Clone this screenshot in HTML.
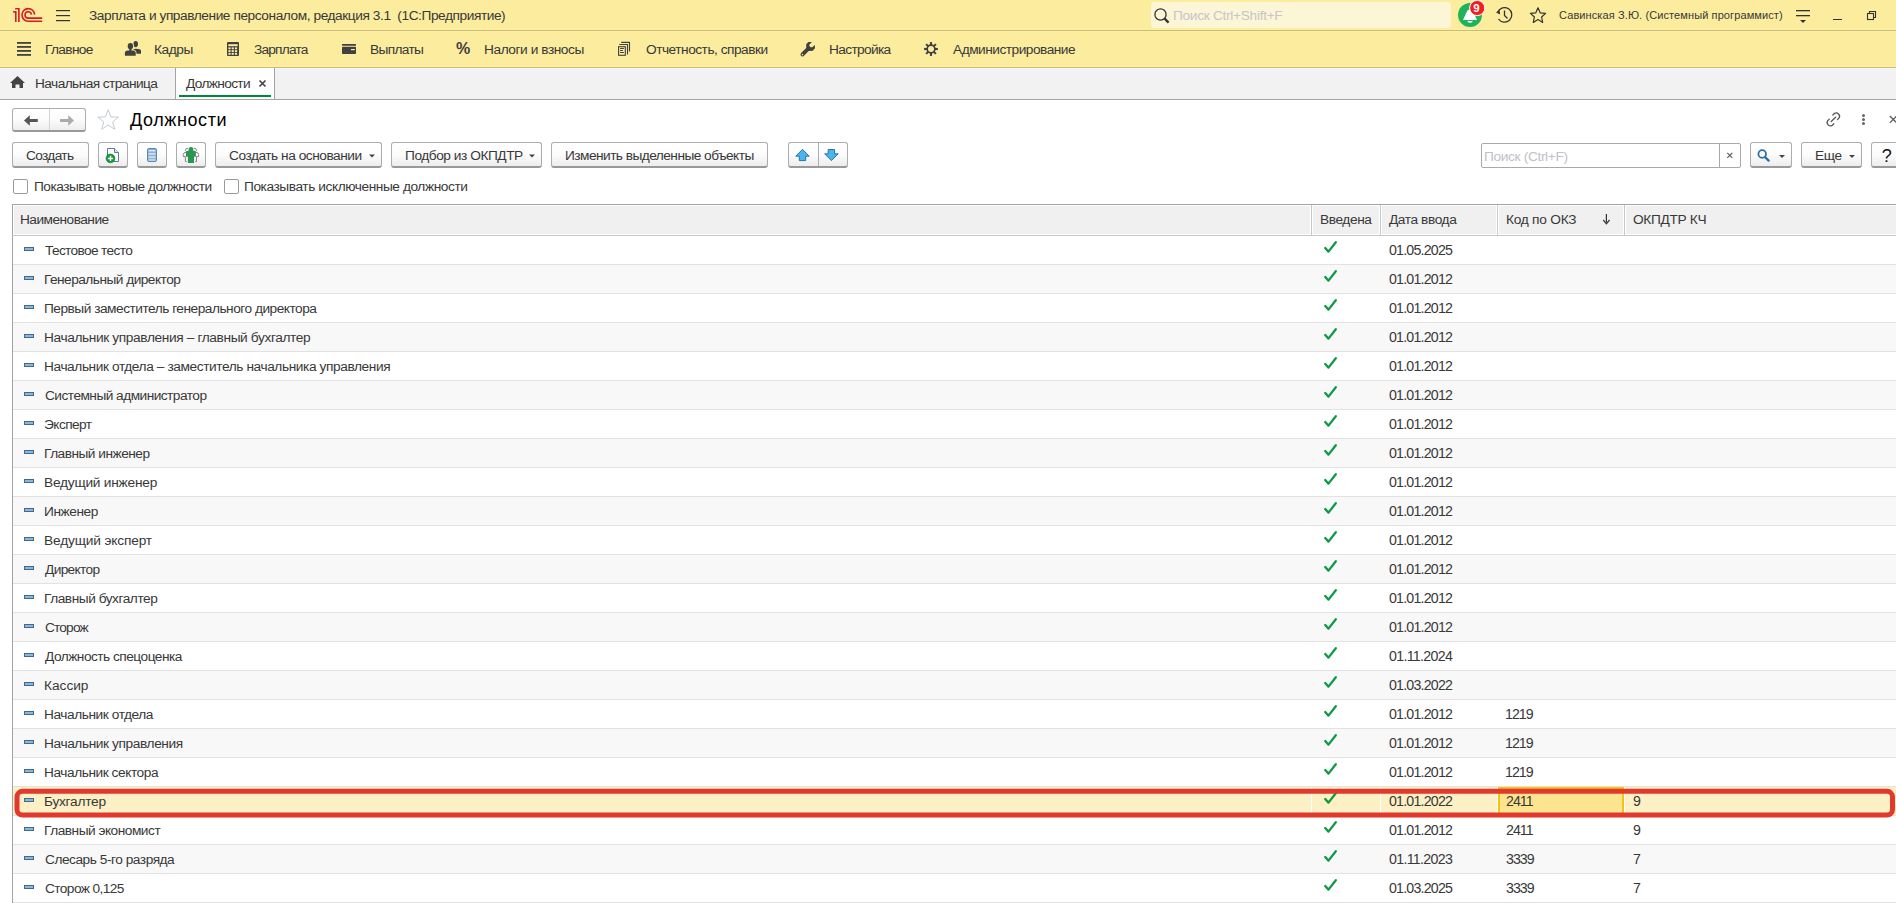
<!DOCTYPE html>
<html><head><meta charset="utf-8"><title>Должности</title>
<style>
html,body{margin:0;padding:0;width:1896px;height:903px;overflow:hidden;background:#fff;position:relative}
body{font-family:"Liberation Sans", sans-serif;color:#383838}
.r{position:absolute;display:block}
.t{position:absolute;white-space:pre}
</style></head><body>
<div class="r" style="left:0px;top:0px;width:1896px;height:30px;background:#fbec9e"></div>
<div class="r" style="left:0px;top:29px;width:1896px;height:1px;background:#fdf0a6"></div>
<div class="r" style="left:0px;top:30px;width:1896px;height:1px;background:#c9bd73"></div>
<div class="r" style="left:0px;top:31px;width:1896px;height:1px;background:#fdf0a6"></div>
<svg class="r" style="left:10px;top:5px;" width="36" height="20" viewBox="10 5 36 20"><g fill="none" stroke="#d81b22" stroke-width="1.6" stroke-linejoin="miter"><path d="M13.2,11.9 H15.8 V22"/><path d="M15.2,8.7 H18.9 V22"/><path d="M34.6,14.6 A6.3,6.3 0 1 0 28.2,21.2 H42.2"/><path d="M31.4,14.6 A3.2,3.2 0 1 0 28.2,18.1 H42.2"/></g></svg>
<svg class="r" style="left:54px;top:8px;" width="18" height="16" viewBox="54 8 18 16"><g fill="#333"><rect x="56" y="10" width="14" height="1.2"/><rect x="56" y="15" width="14" height="1.2"/><rect x="56" y="20" width="14" height="1.2"/></g></svg>
<div id="title" class="t" style="left:89.00px;top:8.25px;font-size:13.7px;line-height:16px;letter-spacing:-0.428px;color:#383838;font-weight:normal;">Зарплата и управление персоналом, редакция 3.1&nbsp; (1С:Предприятие)</div>
<div class="r" style="left:1151px;top:2px;width:300px;height:26px;background:#fdf6d6;border-radius:3px"></div>
<svg class="r" style="left:1152px;top:6px;" width="20" height="20" viewBox="1152 6 20 20"><circle cx="1160.5" cy="14.5" r="5.6" fill="none" stroke="#333" stroke-width="1.3"/><path d="M1164.6,18.6 L1168.6,22.6" stroke="#333" stroke-width="2.2"/></svg>
<div id="srch" class="t" style="left:1173.00px;top:8.25px;font-size:13.7px;line-height:16px;letter-spacing:-0.297px;color:#c6c4cc;font-weight:normal;">Поиск Ctrl+Shift+F</div>
<svg class="r" style="left:1456px;top:0px;" width="32" height="30" viewBox="1456 0 32 30"><circle cx="1470" cy="15" r="12" fill="#1fb35b"/><path d="M1467.4,10.4 Q1470,8.4 1472.6,10.4 L1477,19.9 H1463 Z" fill="#fff"/><path d="M1467.1,20.9 H1472.9 Q1470,24.6 1467.1,20.9 Z" fill="#fff"/><circle cx="1477.2" cy="8" r="7.6" fill="#f51d22" stroke="#fff" stroke-width="1"/></svg>
<div id="badge" class="t" style="left:1473.30px;top:2.12px;font-size:11.5px;line-height:13px;letter-spacing:0.000px;color:#fff;font-weight:bold;">9</div>
<svg class="r" style="left:1494px;top:5px;" width="20" height="20" viewBox="1494 5 20 20"><path d="M1498.5,19 A7.3,7.3 0 1 0 1497.8,12" fill="none" stroke="#333" stroke-width="1.3"/><path d="M1496,12.5 L1499.5,10 L1500.2,14.6 Z" fill="#333"/><path d="M1504.5,10.5 V15.5 L1507.5,18.5" fill="none" stroke="#333" stroke-width="1.3"/></svg>
<svg class="r" style="left:1528px;top:5px;" width="20" height="20" viewBox="1528 5 20 20"><path d="M1538,7.8 L1540.3,12.9 L1545.6,13.4 L1541.6,17 L1542.7,22.4 L1538,19.6 L1533.3,22.4 L1534.4,17 L1530.4,13.4 L1535.7,12.9 Z" fill="none" stroke="#333" stroke-width="1.2" stroke-linejoin="round"/></svg>
<div id="user" class="t" style="left:1559.00px;top:8.69px;font-size:11px;line-height:13px;letter-spacing:0.104px;color:#383838;font-weight:normal;">Савинская З.Ю. (Системный программист)</div>
<svg class="r" style="left:1794px;top:6px;" width="18" height="20" viewBox="1794 6 18 20"><rect x="1796" y="10" width="14" height="1.3" fill="#333"/><rect x="1796" y="15" width="14" height="1.3" fill="#333"/><path d="M1800,20 H1806 L1803,23Z" fill="#333"/></svg>
<div class="r" style="left:1833px;top:19px;width:9px;height:1.3px;background:#333"></div>
<svg class="r" style="left:1864px;top:8px;" width="16" height="16" viewBox="1864 8 16 16"><rect x="1867.5" y="13.5" width="6" height="6" fill="none" stroke="#333" stroke-width="1.1"/><path d="M1869.5,13 V11.5 H1875.5 V17.5 H1874" fill="none" stroke="#333" stroke-width="1.1"/></svg>
<div class="r" style="left:0px;top:32px;width:1896px;height:35px;background:#fbec9e"></div>
<div class="r" style="left:0px;top:66px;width:1896px;height:1px;background:#fdf0a6"></div>
<div class="r" style="left:0px;top:67px;width:1896px;height:1px;background:#c9bd73"></div>
<svg class="r" style="left:15px;top:40px;" width="18" height="18" viewBox="15 40 18 18"><g fill="#404040"><rect x="17" y="42" width="14" height="1.8"/><rect x="17" y="46" width="14" height="1.8"/><rect x="17" y="50" width="14" height="1.8"/><rect x="17" y="54" width="14" height="1.8"/></g></svg>
<div id="m1" class="t" style="left:45.00px;top:42.25px;font-size:13.7px;line-height:16px;letter-spacing:-0.650px;color:#383838;font-weight:normal;">Главное</div>
<svg class="r" style="left:123px;top:40px;" width="20" height="18" viewBox="123 40 20 18"><g fill="#404040"><ellipse cx="135.7" cy="44.1" rx="2.3" ry="3.1"/><path d="M133,53.7 V50.5 Q133,48.8 135.7,48.8 Q141,48.8 141,51 V53.7 Z"/></g><g fill="#fbec9e" stroke="#fbec9e" stroke-width="1.6"><path d="M124.9,55.7 V53.3 Q124.9,50.5 127.7,50.5 H132.9 Q135.7,50.5 135.7,53.3 V55.7 Z"/><ellipse cx="130.4" cy="46.2" rx="2.7" ry="3.1"/><rect x="129.3" y="48.5" width="2.2" height="2.5"/></g><g fill="#404040"><path d="M124.9,55.7 V53.3 Q124.9,50.5 127.7,50.5 H132.9 Q135.7,50.5 135.7,53.3 V55.7 Z"/><ellipse cx="130.4" cy="46.2" rx="2.7" ry="3.1"/><rect x="129.3" y="48.5" width="2.2" height="2.5"/></g></svg>
<div id="m2" class="t" style="left:154.00px;top:42.25px;font-size:13.7px;line-height:16px;letter-spacing:-0.400px;color:#383838;font-weight:normal;">Кадры</div>
<svg class="r" style="left:225px;top:40px;" width="16" height="18" viewBox="225 40 16 18"><rect x="227" y="42" width="12" height="14" rx="1" fill="#404040"/><rect x="228.3" y="44.2" width="9.4" height="2" fill="#fbec9e"/><rect x="228.40" y="47.40" width="2.2" height="1.9" fill="#fbec9e"/><rect x="228.40" y="50.15" width="2.2" height="1.9" fill="#fbec9e"/><rect x="228.40" y="52.90" width="2.2" height="1.9" fill="#fbec9e"/><rect x="231.65" y="47.40" width="2.2" height="1.9" fill="#fbec9e"/><rect x="231.65" y="50.15" width="2.2" height="1.9" fill="#fbec9e"/><rect x="231.65" y="52.90" width="2.2" height="1.9" fill="#fbec9e"/><rect x="234.90" y="47.40" width="2.2" height="1.9" fill="#fbec9e"/><rect x="234.90" y="50.15" width="2.2" height="1.9" fill="#fbec9e"/><rect x="234.90" y="52.90" width="2.2" height="1.9" fill="#fbec9e"/></svg>
<div id="m3" class="t" style="left:254.00px;top:42.25px;font-size:13.7px;line-height:16px;letter-spacing:-0.793px;color:#383838;font-weight:normal;">Зарплата</div>
<svg class="r" style="left:340px;top:42px;" width="18" height="14" viewBox="340 42 18 14"><rect x="342" y="44" width="14" height="1.8" rx="0.5" fill="#404040"/><rect x="342" y="46.7" width="14" height="7.2" rx="0.7" fill="#404040"/><rect x="351" y="49" width="3.8" height="1.2" fill="#fbec9e"/></svg>
<div id="m4" class="t" style="left:370.00px;top:42.25px;font-size:13.7px;line-height:16px;letter-spacing:-0.650px;color:#383838;font-weight:normal;">Выплаты</div>
<div id="pct" class="t" style="left:456.00px;top:40.46px;font-size:16px;line-height:18px;letter-spacing:-0.650px;color:#404040;font-weight:bold;">%</div>
<div id="m5" class="t" style="left:484.00px;top:42.25px;font-size:13.7px;line-height:16px;letter-spacing:-0.436px;color:#383838;font-weight:normal;">Налоги и взносы</div>
<svg class="r" style="left:616px;top:40px;" width="16" height="18" viewBox="616 40 16 18"><g fill="none" stroke="#404040" stroke-width="1.1"><rect x="618.6" y="46.7" width="6.7" height="8.6"/><path d="M619.3,44.5 H627.5 V54.6"/><path d="M621.2,42.4 H629.5 V51.5"/></g><g fill="#404040"><rect x="620.1" y="48" width="3.8" height="1"/><rect x="620.1" y="50" width="2.8" height="1"/><rect x="620.1" y="52" width="3.8" height="1"/></g></svg>
<div id="m6" class="t" style="left:646.00px;top:42.25px;font-size:13.7px;line-height:16px;letter-spacing:-0.483px;color:#383838;font-weight:normal;">Отчетность, справки</div>
<svg class="r" style="left:798px;top:40px;" width="20" height="18" viewBox="798 40 20 18"><path d="M808.4,42 L811.9,42 L809.1,45 Q809.4,47.4 811.9,47.5 L814.9,45 L814.9,48.2 L812.8,50.7 L808.7,50.9 L803.7,55.9 Q802.2,57.1 800.9,55.8 Q799.8,54.4 801.1,53.1 L806.2,48.1 L806.2,44.2 Z" fill="#404040"/><circle cx="802.4" cy="54.6" r="0.8" fill="#fbec9e"/></svg>
<div id="m7" class="t" style="left:829.00px;top:42.25px;font-size:13.7px;line-height:16px;letter-spacing:-0.650px;color:#383838;font-weight:normal;">Настройка</div>
<svg class="r" style="left:922px;top:40px;" width="18" height="18" viewBox="922 40 18 18"><g fill="#404040"><rect x="929.95" y="42.1" width="2.1" height="13.8" transform="rotate(0 931 49)"/><rect x="929.95" y="42.1" width="2.1" height="13.8" transform="rotate(45 931 49)"/><rect x="929.95" y="42.1" width="2.1" height="13.8" transform="rotate(90 931 49)"/><rect x="929.95" y="42.1" width="2.1" height="13.8" transform="rotate(135 931 49)"/></g><circle cx="931" cy="49" r="4.7" fill="#404040"/><circle cx="931" cy="49" r="3.0" fill="#fbec9e"/></svg>
<div id="m8" class="t" style="left:953.00px;top:42.25px;font-size:13.7px;line-height:16px;letter-spacing:-0.494px;color:#383838;font-weight:normal;">Администрирование</div>
<div class="r" style="left:0px;top:68px;width:1896px;height:31px;background:#f2f2f2"></div>
<div class="r" style="left:0px;top:68px;width:175px;height:1px;background:#f6f6fa"></div>
<div class="r" style="left:275px;top:68px;width:1621px;height:1px;background:#f6f6fa"></div>
<div class="r" style="left:0px;top:99px;width:1896px;height:1px;background:#a3a3a3"></div>
<svg class="r" style="left:8px;top:74px;" width="20" height="16" viewBox="8 74 20 16"><path d="M17.5,76 L25,83 L23,83 L23,88 L19.5,88 L19.5,84.5 L15.5,84.5 L15.5,88 L12,88 L12,83 L10,83 Z" fill="#444"/></svg>
<div id="tab1" class="t" style="left:35.00px;top:76.25px;font-size:13.7px;line-height:16px;letter-spacing:-0.562px;color:#383838;font-weight:normal;">Начальная страница</div>
<div class="r" style="left:175px;top:68px;width:1px;height:31px;background:#a3a3a3"></div>
<div class="r" style="left:176px;top:68px;width:98px;height:31px;background:#fff"></div>
<div class="r" style="left:274px;top:68px;width:1px;height:31px;background:#a3a3a3"></div>
<div class="r" style="left:179px;top:95px;width:92px;height:2px;background:#00873a"></div>
<div id="tab2" class="t" style="left:186.00px;top:76.25px;font-size:13.7px;line-height:16px;letter-spacing:-0.650px;color:#383838;font-weight:normal;">Должности</div>
<svg class="r" style="left:257px;top:78px;" width="12" height="12" viewBox="257 78 12 12"><path d="M259.5,80.5 L265.5,86.5 M265.5,80.5 L259.5,86.5" stroke="#444" stroke-width="1.6"/></svg>
<div class="r" style="left:12px;top:108px;width:74px;height:24px;box-sizing:border-box;border:1px solid #adadad;border-bottom:2px solid #999;border-radius:3px;background:linear-gradient(#ffffff 0%,#fcfcfc 50%,#ededed 100%);"></div>
<div class="r" style="left:49px;top:109px;width:1px;height:21px;background:#d4d4d4"></div>
<svg class="r" style="left:22px;top:112px;" width="18" height="16" viewBox="22 112 18 16"><path d="M24,120.5 L29.8,115.2 V119 H37.8 V122 H29.8 V125.7 Z" fill="#555"/></svg>
<svg class="r" style="left:58px;top:112px;" width="18" height="16" viewBox="58 112 18 16"><path d="M74,120.5 L68.2,115.2 V119 H60 V122 H68.2 V125.7 Z" fill="#aaa"/></svg>
<svg class="r" style="left:94px;top:107px;" width="28" height="26" viewBox="94 107 28 26"><path d="M108.2,109.8 L110.9,116.9 L118.6,117.2 L112.6,121.9 L114.7,129.3 L108.2,125 L101.7,129.3 L103.8,121.9 L97.8,117.2 L105.5,116.9 Z" fill="none" stroke="#c5ccd3" stroke-width="1"/></svg>
<div id="ftitle" class="t" style="left:130.00px;top:110.26px;font-size:18px;line-height:21px;letter-spacing:0.600px;color:#000;font-weight:normal;">Должности</div>
<svg class="r" style="left:1822px;top:108px;" width="24" height="24" viewBox="1822 108 24 24"><g fill="none" stroke="#555" stroke-width="1.3" stroke-linecap="round"><path d="M1832.9,115.0 L1834.3,113.6 A3.3,3.3 0 0 1 1838.9,118.2 L1837.5,119.6"/><path d="M1829.2,119.2 L1827.8,120.6 A3.3,3.3 0 0 0 1832.4,125.2 L1833.8,123.8"/><path d="M1831.2,121.5 L1835.6,117.3"/></g></svg>
<svg class="r" style="left:1858px;top:110px;" width="10" height="18" viewBox="1858 110 10 18"><g fill="#666"><circle cx="1863.5" cy="115.4" r="1.5"/><circle cx="1863.5" cy="119.4" r="1.5"/><circle cx="1863.5" cy="123.4" r="1.5"/></g></svg>
<svg class="r" style="left:1886px;top:112px;" width="10" height="14" viewBox="1886 112 10 14"><path d="M1889.8,116 L1896.6,122.8 M1896.6,116 L1889.8,122.8" stroke="#555" stroke-width="1.2"/></svg>
<div class="r" style="left:12px;top:142px;width:77px;height:26px;box-sizing:border-box;border:1px solid #adadad;border-bottom:2px solid #999;border-radius:3px;background:linear-gradient(#ffffff 0%,#fcfcfc 50%,#ededed 100%);"></div>
<div id="b1" class="t" style="left:26.00px;top:148.25px;font-size:13.7px;line-height:16px;letter-spacing:-0.650px;color:#383838;font-weight:normal;">Создать</div>
<div class="r" style="left:98px;top:142px;width:30px;height:26px;box-sizing:border-box;border:1px solid #adadad;border-bottom:2px solid #999;border-radius:3px;background:linear-gradient(#ffffff 0%,#fcfcfc 50%,#ededed 100%);"></div>
<svg class="r" style="left:104px;top:146px;" width="20" height="20" viewBox="104 146 20 20"><path d="M107.5,148.5 H114.5 L118.5,152.5 V161.5 H107.5 Z" fill="#fff" stroke="#5f7a94" stroke-width="1"/><path d="M114.5,148.5 V152.5 H118.5" fill="#dfe6ee" stroke="#5f7a94" stroke-width="1"/><circle cx="110.5" cy="158.4" r="4.4" fill="#139a36" stroke="#0b7a28" stroke-width="0.6"/><path d="M110.5,155.8 V161 M107.9,158.4 H113.1" stroke="#fff" stroke-width="1.5"/></svg>
<div class="r" style="left:137px;top:142px;width:30px;height:26px;box-sizing:border-box;border:1px solid #adadad;border-bottom:2px solid #999;border-radius:3px;background:linear-gradient(#ffffff 0%,#fcfcfc 50%,#ededed 100%);"></div>
<svg class="r" style="left:144px;top:146px;" width="16" height="18" viewBox="144 146 16 18"><rect x="147.5" y="148.5" width="9" height="13" rx="1.5" fill="#8cb3d4" stroke="#5c84a8" stroke-width="1"/><g fill="#dce9f4"><rect x="148.5" y="150" width="7" height="1.4"/><rect x="148.5" y="153.2" width="7" height="1.4"/><rect x="148.5" y="156.4" width="7" height="1.4"/><rect x="148.5" y="159.4" width="7" height="1.2"/></g></svg>
<div class="r" style="left:176px;top:142px;width:30px;height:26px;box-sizing:border-box;border:1px solid #adadad;border-bottom:2px solid #999;border-radius:3px;background:linear-gradient(#ffffff 0%,#fcfcfc 50%,#ededed 100%);"></div>
<svg class="r" style="left:180px;top:145px;" width="22" height="20" viewBox="180 145 22 20"><path d="M188.7,148.6 Q188.7,146.9 190.95,146.9 Q193.2,146.9 193.2,148.6 V150.8 H194.6 Q195.9,150.8 195.9,152.2 V156.7 H194 V162.9 H187.9 V156.7 H186 V152.2 Q186,150.8 187.3,150.8 H188.7 Z" fill="#2a9651"/><path d="M188.2,148.3 Q185.4,148.1 185.4,150.4 V151.2 M186.1,152.3 Q183.3,152.4 183.3,154.5 V156.5 H185.4 V161.5 H186.7 M 193.70 148.30 Q 196.50 148.10 196.50 150.40 V 151.20 M 195.80 152.30 Q 198.60 152.40 198.60 154.50 V 156.50 H 196.50 V 161.50 H 195.20" fill="none" stroke="#777" stroke-width="0.9"/></svg>
<div class="r" style="left:215px;top:142px;width:167px;height:26px;box-sizing:border-box;border:1px solid #adadad;border-bottom:2px solid #999;border-radius:3px;background:linear-gradient(#ffffff 0%,#fcfcfc 50%,#ededed 100%);"></div>
<div id="b2" class="t" style="left:229.00px;top:148.25px;font-size:13.7px;line-height:16px;letter-spacing:-0.466px;color:#383838;font-weight:normal;">Создать на основании</div>
<svg class="r" style="left:366px;top:152px;" width="12" height="8" viewBox="366 152 12 8"><path d="M369,154.5 H375 L372,157.5Z" fill="#444"/></svg>
<div class="r" style="left:391px;top:142px;width:151px;height:26px;box-sizing:border-box;border:1px solid #adadad;border-bottom:2px solid #999;border-radius:3px;background:linear-gradient(#ffffff 0%,#fcfcfc 50%,#ededed 100%);"></div>
<div id="b3" class="t" style="left:405.00px;top:148.25px;font-size:13.7px;line-height:16px;letter-spacing:-0.450px;color:#383838;font-weight:normal;">Подбор из ОКПДТР</div>
<svg class="r" style="left:526px;top:152px;" width="12" height="8" viewBox="526 152 12 8"><path d="M529,154.5 H535 L532,157.5Z" fill="#444"/></svg>
<div class="r" style="left:551px;top:142px;width:217px;height:26px;box-sizing:border-box;border:1px solid #adadad;border-bottom:2px solid #999;border-radius:3px;background:linear-gradient(#ffffff 0%,#fcfcfc 50%,#ededed 100%);"></div>
<div id="b4" class="t" style="left:565.00px;top:148.25px;font-size:13.7px;line-height:16px;letter-spacing:-0.535px;color:#383838;font-weight:normal;">Изменить выделенные объекты</div>
<div class="r" style="left:788px;top:142px;width:60px;height:26px;box-sizing:border-box;border:1px solid #adadad;border-bottom:2px solid #999;border-radius:3px;background:linear-gradient(#ffffff 0%,#fcfcfc 50%,#ededed 100%);"></div>
<div class="r" style="left:818px;top:143px;width:1px;height:23px;background:#ababab"></div>
<svg class="r" style="left:792px;top:146px;" width="22" height="18" viewBox="792 146 22 18"><path d="M802.5,149.3 L809.2,156.2 H805.7 V160.6 H799.3 V156.2 H795.8 Z" fill="#4ab4ec" stroke="#1d6a9a" stroke-width="0.9" stroke-linejoin="round"/></svg>
<svg class="r" style="left:822px;top:146px;" width="20" height="18" viewBox="822 146 20 18"><path d="M831.4,160.6 L838.2,153.8 H834.6 V149.5 H828.2 V153.8 H824.7 Z" fill="#4ab4ec" stroke="#1d6a9a" stroke-width="0.9" stroke-linejoin="round"/></svg>
<div class="r" style="left:1481px;top:143px;width:260px;height:25px;box-sizing:border-box;border:1px solid #a9a9a9;border-radius:2px;background:#fff"></div>
<div class="r" style="left:1719px;top:144px;width:1px;height:23px;background:#a9a9a9"></div>
<div id="srch2" class="t" style="left:1484.00px;top:149.25px;font-size:13.7px;line-height:16px;letter-spacing:-0.342px;color:#c0c0c8;font-weight:normal;">Поиск (Ctrl+F)</div>
<svg class="r" style="left:1724px;top:150px;" width="12" height="12" viewBox="1724 150 12 12"><path d="M1727.3,152.8 L1732.3,157.8 M1732.3,152.8 L1727.3,157.8" stroke="#555" stroke-width="1.1"/></svg>
<div class="r" style="left:1750px;top:142px;width:42px;height:26px;box-sizing:border-box;border:1px solid #adadad;border-bottom:2px solid #999;border-radius:3px;background:linear-gradient(#ffffff 0%,#fcfcfc 50%,#ededed 100%);"></div>
<svg class="r" style="left:1754px;top:146px;" width="20" height="20" viewBox="1754 146 20 20"><circle cx="1762.2" cy="154" r="3.8" fill="none" stroke="#2e6ea6" stroke-width="1.8"/><path d="M1765,157 L1768.6,160.6" stroke="#2e6ea6" stroke-width="2.4" stroke-linecap="round"/></svg>
<svg class="r" style="left:1776px;top:152px;" width="12" height="8" viewBox="1776 152 12 8"><path d="M1779,155 H1785 L1782,158Z" fill="#444"/></svg>
<div class="r" style="left:1801px;top:142px;width:61px;height:26px;box-sizing:border-box;border:1px solid #adadad;border-bottom:2px solid #999;border-radius:3px;background:linear-gradient(#ffffff 0%,#fcfcfc 50%,#ededed 100%);"></div>
<div id="b5" class="t" style="left:1815.00px;top:148.25px;font-size:13.7px;line-height:16px;letter-spacing:-0.400px;color:#383838;font-weight:normal;">Еще</div>
<svg class="r" style="left:1847px;top:152px;" width="12" height="8" viewBox="1847 152 12 8"><path d="M1849,155 H1855 L1852,158Z" fill="#444"/></svg>
<div class="r" style="left:1871px;top:142px;width:40px;height:26px;box-sizing:border-box;border:1px solid #adadad;border-bottom:2px solid #999;border-radius:3px;background:linear-gradient(#ffffff 0%,#fcfcfc 50%,#ededed 100%);"></div>
<div id="b6" class="t" style="left:1881.70px;top:145.56px;font-size:18px;line-height:21px;letter-spacing:0.000px;color:#111;font-weight:normal;">?</div>
<div class="r" style="left:13px;top:179px;width:15px;height:15px;box-sizing:border-box;border:1px solid #9b9b9b;border-radius:2px;background:#fff"></div>
<div id="cb1" class="t" style="left:34.00px;top:179.25px;font-size:13.7px;line-height:16px;letter-spacing:-0.510px;color:#383838;font-weight:normal;">Показывать новые должности</div>
<div class="r" style="left:224px;top:179px;width:15px;height:15px;box-sizing:border-box;border:1px solid #9b9b9b;border-radius:2px;background:#fff"></div>
<div id="cb2" class="t" style="left:244.00px;top:179.25px;font-size:13.7px;line-height:16px;letter-spacing:-0.424px;color:#383838;font-weight:normal;">Показывать исключенные должности</div>
<div class="r" style="left:12px;top:204px;width:1884px;height:1px;background:#a3a3a3"></div>
<div class="r" style="left:12px;top:204px;width:1px;height:699px;background:#a3a3a3"></div>
<div class="r" style="left:14px;top:206px;width:1882px;height:28px;background:#f0f0f0"></div>
<div class="r" style="left:12px;top:235px;width:1884px;height:1px;background:#c8c8c8"></div>
<div class="r" style="left:1310px;top:205px;width:1px;height:29px;background:#fff"></div>
<div class="r" style="left:1311px;top:205px;width:1px;height:30px;background:#c8c8c8"></div>
<div class="r" style="left:1312px;top:205px;width:1px;height:29px;background:#fff"></div>
<div class="r" style="left:1379px;top:205px;width:1px;height:29px;background:#fff"></div>
<div class="r" style="left:1380px;top:205px;width:1px;height:30px;background:#c8c8c8"></div>
<div class="r" style="left:1381px;top:205px;width:1px;height:29px;background:#fff"></div>
<div class="r" style="left:1496px;top:205px;width:1px;height:29px;background:#fff"></div>
<div class="r" style="left:1497px;top:205px;width:1px;height:30px;background:#c8c8c8"></div>
<div class="r" style="left:1498px;top:205px;width:1px;height:29px;background:#fff"></div>
<div class="r" style="left:1623px;top:205px;width:1px;height:29px;background:#fff"></div>
<div class="r" style="left:1624px;top:205px;width:1px;height:30px;background:#c8c8c8"></div>
<div class="r" style="left:1625px;top:205px;width:1px;height:29px;background:#fff"></div>
<div id="h1" class="t" style="left:20.00px;top:212.25px;font-size:13.7px;line-height:16px;letter-spacing:-0.523px;color:#383838;font-weight:normal;">Наименование</div>
<div id="h2" class="t" style="left:1320.00px;top:212.25px;font-size:13.7px;line-height:16px;letter-spacing:-0.400px;color:#383838;font-weight:normal;">Введена</div>
<div id="h3" class="t" style="left:1389.00px;top:212.25px;font-size:13.7px;line-height:16px;letter-spacing:-0.406px;color:#383838;font-weight:normal;">Дата ввода</div>
<div id="h4" class="t" style="left:1506.00px;top:212.25px;font-size:13.7px;line-height:16px;letter-spacing:-0.239px;color:#383838;font-weight:normal;">Код по ОКЗ</div>
<svg class="r" style="left:1600px;top:212px;" width="12" height="14" viewBox="1600 212 12 14"><path d="M1606.4,214 V222.5" stroke="#333" stroke-width="1.2"/><path d="M1603.3,220 L1606.4,223.8 L1609.5,220" fill="none" stroke="#333" stroke-width="1.2"/></svg>
<div id="h5" class="t" style="left:1633.00px;top:212.25px;font-size:13.7px;line-height:16px;letter-spacing:-0.313px;color:#383838;font-weight:normal;">ОКПДТР КЧ</div>
<div class="r" style="left:13px;top:236px;width:1883px;height:28px;background:#ffffff"></div>
<div class="r" style="left:13px;top:264px;width:1883px;height:1px;background:#e2e2e2"></div>
<svg class="r" style="left:22px;top:245px;" width="14" height="8" viewBox="22 245 14 8"><rect x="24.5" y="247.5" width="9" height="3" fill="#8cb6dc" stroke="#3f6a8e" stroke-width="1"/></svg>
<div id="r0n" class="t" style="left:45.00px;top:243.25px;font-size:13.7px;line-height:16px;letter-spacing:-0.650px;color:#383838;font-weight:normal;">Тестовое тесто</div>
<svg class="r" style="left:1322px;top:240px;" width="18" height="16" viewBox="1322 240 18 16"><path d="M1325.2,248 L1328.5,251.6 L1335.8,242.2" fill="none" stroke="#0f9a47" stroke-width="2.3" stroke-linecap="round" stroke-linejoin="round"/></svg>
<div id="r0d" class="t" style="left:1389.00px;top:242.08px;font-size:14.2px;line-height:16px;letter-spacing:-0.783px;color:#383838;font-weight:normal;">01.05.2025</div>
<div class="r" style="left:13px;top:265px;width:1883px;height:28px;background:#f8f8f8"></div>
<div class="r" style="left:13px;top:293px;width:1883px;height:1px;background:#e2e2e2"></div>
<svg class="r" style="left:22px;top:274px;" width="14" height="8" viewBox="22 274 14 8"><rect x="24.5" y="276.5" width="9" height="3" fill="#8cb6dc" stroke="#3f6a8e" stroke-width="1"/></svg>
<div id="r1n" class="t" style="left:44.00px;top:272.25px;font-size:13.7px;line-height:16px;letter-spacing:-0.524px;color:#383838;font-weight:normal;">Генеральный директор</div>
<svg class="r" style="left:1322px;top:269px;" width="18" height="16" viewBox="1322 269 18 16"><path d="M1325.2,277 L1328.5,280.6 L1335.8,271.2" fill="none" stroke="#0f9a47" stroke-width="2.3" stroke-linecap="round" stroke-linejoin="round"/></svg>
<div id="r1d" class="t" style="left:1389.00px;top:271.08px;font-size:14.2px;line-height:16px;letter-spacing:-0.783px;color:#383838;font-weight:normal;">01.01.2012</div>
<div class="r" style="left:13px;top:294px;width:1883px;height:28px;background:#ffffff"></div>
<div class="r" style="left:13px;top:322px;width:1883px;height:1px;background:#e2e2e2"></div>
<svg class="r" style="left:22px;top:303px;" width="14" height="8" viewBox="22 303 14 8"><rect x="24.5" y="305.5" width="9" height="3" fill="#8cb6dc" stroke="#3f6a8e" stroke-width="1"/></svg>
<div id="r2n" class="t" style="left:44.00px;top:301.25px;font-size:13.7px;line-height:16px;letter-spacing:-0.490px;color:#383838;font-weight:normal;">Первый заместитель генерального директора</div>
<svg class="r" style="left:1322px;top:298px;" width="18" height="16" viewBox="1322 298 18 16"><path d="M1325.2,306 L1328.5,309.6 L1335.8,300.2" fill="none" stroke="#0f9a47" stroke-width="2.3" stroke-linecap="round" stroke-linejoin="round"/></svg>
<div id="r2d" class="t" style="left:1389.00px;top:300.08px;font-size:14.2px;line-height:16px;letter-spacing:-0.783px;color:#383838;font-weight:normal;">01.01.2012</div>
<div class="r" style="left:13px;top:323px;width:1883px;height:28px;background:#f8f8f8"></div>
<div class="r" style="left:13px;top:351px;width:1883px;height:1px;background:#e2e2e2"></div>
<svg class="r" style="left:22px;top:332px;" width="14" height="8" viewBox="22 332 14 8"><rect x="24.5" y="334.5" width="9" height="3" fill="#8cb6dc" stroke="#3f6a8e" stroke-width="1"/></svg>
<div id="r3n" class="t" style="left:44.00px;top:330.25px;font-size:13.7px;line-height:16px;letter-spacing:-0.371px;color:#383838;font-weight:normal;">Начальник управления – главный бухгалтер</div>
<svg class="r" style="left:1322px;top:327px;" width="18" height="16" viewBox="1322 327 18 16"><path d="M1325.2,335 L1328.5,338.6 L1335.8,329.2" fill="none" stroke="#0f9a47" stroke-width="2.3" stroke-linecap="round" stroke-linejoin="round"/></svg>
<div id="r3d" class="t" style="left:1389.00px;top:329.08px;font-size:14.2px;line-height:16px;letter-spacing:-0.783px;color:#383838;font-weight:normal;">01.01.2012</div>
<div class="r" style="left:13px;top:352px;width:1883px;height:28px;background:#ffffff"></div>
<div class="r" style="left:13px;top:380px;width:1883px;height:1px;background:#e2e2e2"></div>
<svg class="r" style="left:22px;top:361px;" width="14" height="8" viewBox="22 361 14 8"><rect x="24.5" y="363.5" width="9" height="3" fill="#8cb6dc" stroke="#3f6a8e" stroke-width="1"/></svg>
<div id="r4n" class="t" style="left:44.00px;top:359.25px;font-size:13.7px;line-height:16px;letter-spacing:-0.407px;color:#383838;font-weight:normal;">Начальник отдела – заместитель начальника управления</div>
<svg class="r" style="left:1322px;top:356px;" width="18" height="16" viewBox="1322 356 18 16"><path d="M1325.2,364 L1328.5,367.6 L1335.8,358.2" fill="none" stroke="#0f9a47" stroke-width="2.3" stroke-linecap="round" stroke-linejoin="round"/></svg>
<div id="r4d" class="t" style="left:1389.00px;top:358.08px;font-size:14.2px;line-height:16px;letter-spacing:-0.783px;color:#383838;font-weight:normal;">01.01.2012</div>
<div class="r" style="left:13px;top:381px;width:1883px;height:28px;background:#f8f8f8"></div>
<div class="r" style="left:13px;top:409px;width:1883px;height:1px;background:#e2e2e2"></div>
<svg class="r" style="left:22px;top:390px;" width="14" height="8" viewBox="22 390 14 8"><rect x="24.5" y="392.5" width="9" height="3" fill="#8cb6dc" stroke="#3f6a8e" stroke-width="1"/></svg>
<div id="r5n" class="t" style="left:45.00px;top:388.25px;font-size:13.7px;line-height:16px;letter-spacing:-0.527px;color:#383838;font-weight:normal;">Системный администратор</div>
<svg class="r" style="left:1322px;top:385px;" width="18" height="16" viewBox="1322 385 18 16"><path d="M1325.2,393 L1328.5,396.6 L1335.8,387.2" fill="none" stroke="#0f9a47" stroke-width="2.3" stroke-linecap="round" stroke-linejoin="round"/></svg>
<div id="r5d" class="t" style="left:1389.00px;top:387.08px;font-size:14.2px;line-height:16px;letter-spacing:-0.783px;color:#383838;font-weight:normal;">01.01.2012</div>
<div class="r" style="left:13px;top:410px;width:1883px;height:28px;background:#ffffff"></div>
<div class="r" style="left:13px;top:438px;width:1883px;height:1px;background:#e2e2e2"></div>
<svg class="r" style="left:22px;top:419px;" width="14" height="8" viewBox="22 419 14 8"><rect x="24.5" y="421.5" width="9" height="3" fill="#8cb6dc" stroke="#3f6a8e" stroke-width="1"/></svg>
<div id="r6n" class="t" style="left:44.00px;top:417.25px;font-size:13.7px;line-height:16px;letter-spacing:-0.550px;color:#383838;font-weight:normal;">Эксперт</div>
<svg class="r" style="left:1322px;top:414px;" width="18" height="16" viewBox="1322 414 18 16"><path d="M1325.2,422 L1328.5,425.6 L1335.8,416.2" fill="none" stroke="#0f9a47" stroke-width="2.3" stroke-linecap="round" stroke-linejoin="round"/></svg>
<div id="r6d" class="t" style="left:1389.00px;top:416.08px;font-size:14.2px;line-height:16px;letter-spacing:-0.783px;color:#383838;font-weight:normal;">01.01.2012</div>
<div class="r" style="left:13px;top:439px;width:1883px;height:28px;background:#f8f8f8"></div>
<div class="r" style="left:13px;top:467px;width:1883px;height:1px;background:#e2e2e2"></div>
<svg class="r" style="left:22px;top:448px;" width="14" height="8" viewBox="22 448 14 8"><rect x="24.5" y="450.5" width="9" height="3" fill="#8cb6dc" stroke="#3f6a8e" stroke-width="1"/></svg>
<div id="r7n" class="t" style="left:44.00px;top:446.25px;font-size:13.7px;line-height:16px;letter-spacing:-0.507px;color:#383838;font-weight:normal;">Главный инженер</div>
<svg class="r" style="left:1322px;top:443px;" width="18" height="16" viewBox="1322 443 18 16"><path d="M1325.2,451 L1328.5,454.6 L1335.8,445.2" fill="none" stroke="#0f9a47" stroke-width="2.3" stroke-linecap="round" stroke-linejoin="round"/></svg>
<div id="r7d" class="t" style="left:1389.00px;top:445.08px;font-size:14.2px;line-height:16px;letter-spacing:-0.783px;color:#383838;font-weight:normal;">01.01.2012</div>
<div class="r" style="left:13px;top:468px;width:1883px;height:28px;background:#ffffff"></div>
<div class="r" style="left:13px;top:496px;width:1883px;height:1px;background:#e2e2e2"></div>
<svg class="r" style="left:22px;top:477px;" width="14" height="8" viewBox="22 477 14 8"><rect x="24.5" y="479.5" width="9" height="3" fill="#8cb6dc" stroke="#3f6a8e" stroke-width="1"/></svg>
<div id="r8n" class="t" style="left:44.00px;top:475.25px;font-size:13.7px;line-height:16px;letter-spacing:-0.221px;color:#383838;font-weight:normal;">Ведущий инженер</div>
<svg class="r" style="left:1322px;top:472px;" width="18" height="16" viewBox="1322 472 18 16"><path d="M1325.2,480 L1328.5,483.6 L1335.8,474.2" fill="none" stroke="#0f9a47" stroke-width="2.3" stroke-linecap="round" stroke-linejoin="round"/></svg>
<div id="r8d" class="t" style="left:1389.00px;top:474.08px;font-size:14.2px;line-height:16px;letter-spacing:-0.783px;color:#383838;font-weight:normal;">01.01.2012</div>
<div class="r" style="left:13px;top:497px;width:1883px;height:28px;background:#f8f8f8"></div>
<div class="r" style="left:13px;top:525px;width:1883px;height:1px;background:#e2e2e2"></div>
<svg class="r" style="left:22px;top:506px;" width="14" height="8" viewBox="22 506 14 8"><rect x="24.5" y="508.5" width="9" height="3" fill="#8cb6dc" stroke="#3f6a8e" stroke-width="1"/></svg>
<div id="r9n" class="t" style="left:44.00px;top:504.25px;font-size:13.7px;line-height:16px;letter-spacing:-0.433px;color:#383838;font-weight:normal;">Инженер</div>
<svg class="r" style="left:1322px;top:501px;" width="18" height="16" viewBox="1322 501 18 16"><path d="M1325.2,509 L1328.5,512.6 L1335.8,503.2" fill="none" stroke="#0f9a47" stroke-width="2.3" stroke-linecap="round" stroke-linejoin="round"/></svg>
<div id="r9d" class="t" style="left:1389.00px;top:503.08px;font-size:14.2px;line-height:16px;letter-spacing:-0.783px;color:#383838;font-weight:normal;">01.01.2012</div>
<div class="r" style="left:13px;top:526px;width:1883px;height:28px;background:#ffffff"></div>
<div class="r" style="left:13px;top:554px;width:1883px;height:1px;background:#e2e2e2"></div>
<svg class="r" style="left:22px;top:535px;" width="14" height="8" viewBox="22 535 14 8"><rect x="24.5" y="537.5" width="9" height="3" fill="#8cb6dc" stroke="#3f6a8e" stroke-width="1"/></svg>
<div id="r10n" class="t" style="left:44.00px;top:533.25px;font-size:13.7px;line-height:16px;letter-spacing:-0.150px;color:#383838;font-weight:normal;">Ведущий эксперт</div>
<svg class="r" style="left:1322px;top:530px;" width="18" height="16" viewBox="1322 530 18 16"><path d="M1325.2,538 L1328.5,541.6 L1335.8,532.2" fill="none" stroke="#0f9a47" stroke-width="2.3" stroke-linecap="round" stroke-linejoin="round"/></svg>
<div id="r10d" class="t" style="left:1389.00px;top:532.08px;font-size:14.2px;line-height:16px;letter-spacing:-0.783px;color:#383838;font-weight:normal;">01.01.2012</div>
<div class="r" style="left:13px;top:555px;width:1883px;height:28px;background:#f8f8f8"></div>
<div class="r" style="left:13px;top:583px;width:1883px;height:1px;background:#e2e2e2"></div>
<svg class="r" style="left:22px;top:564px;" width="14" height="8" viewBox="22 564 14 8"><rect x="24.5" y="566.5" width="9" height="3" fill="#8cb6dc" stroke="#3f6a8e" stroke-width="1"/></svg>
<div id="r11n" class="t" style="left:45.00px;top:562.25px;font-size:13.7px;line-height:16px;letter-spacing:-0.636px;color:#383838;font-weight:normal;">Директор</div>
<svg class="r" style="left:1322px;top:559px;" width="18" height="16" viewBox="1322 559 18 16"><path d="M1325.2,567 L1328.5,570.6 L1335.8,561.2" fill="none" stroke="#0f9a47" stroke-width="2.3" stroke-linecap="round" stroke-linejoin="round"/></svg>
<div id="r11d" class="t" style="left:1389.00px;top:561.08px;font-size:14.2px;line-height:16px;letter-spacing:-0.783px;color:#383838;font-weight:normal;">01.01.2012</div>
<div class="r" style="left:13px;top:584px;width:1883px;height:28px;background:#ffffff"></div>
<div class="r" style="left:13px;top:612px;width:1883px;height:1px;background:#e2e2e2"></div>
<svg class="r" style="left:22px;top:593px;" width="14" height="8" viewBox="22 593 14 8"><rect x="24.5" y="595.5" width="9" height="3" fill="#8cb6dc" stroke="#3f6a8e" stroke-width="1"/></svg>
<div id="r12n" class="t" style="left:44.00px;top:591.25px;font-size:13.7px;line-height:16px;letter-spacing:-0.463px;color:#383838;font-weight:normal;">Главный бухгалтер</div>
<svg class="r" style="left:1322px;top:588px;" width="18" height="16" viewBox="1322 588 18 16"><path d="M1325.2,596 L1328.5,599.6 L1335.8,590.2" fill="none" stroke="#0f9a47" stroke-width="2.3" stroke-linecap="round" stroke-linejoin="round"/></svg>
<div id="r12d" class="t" style="left:1389.00px;top:590.08px;font-size:14.2px;line-height:16px;letter-spacing:-0.783px;color:#383838;font-weight:normal;">01.01.2012</div>
<div class="r" style="left:13px;top:613px;width:1883px;height:28px;background:#f8f8f8"></div>
<div class="r" style="left:13px;top:641px;width:1883px;height:1px;background:#e2e2e2"></div>
<svg class="r" style="left:22px;top:622px;" width="14" height="8" viewBox="22 622 14 8"><rect x="24.5" y="624.5" width="9" height="3" fill="#8cb6dc" stroke="#3f6a8e" stroke-width="1"/></svg>
<div id="r13n" class="t" style="left:45.00px;top:620.25px;font-size:13.7px;line-height:16px;letter-spacing:-0.830px;color:#383838;font-weight:normal;">Сторож</div>
<svg class="r" style="left:1322px;top:617px;" width="18" height="16" viewBox="1322 617 18 16"><path d="M1325.2,625 L1328.5,628.6 L1335.8,619.2" fill="none" stroke="#0f9a47" stroke-width="2.3" stroke-linecap="round" stroke-linejoin="round"/></svg>
<div id="r13d" class="t" style="left:1389.00px;top:619.08px;font-size:14.2px;line-height:16px;letter-spacing:-0.783px;color:#383838;font-weight:normal;">01.01.2012</div>
<div class="r" style="left:13px;top:642px;width:1883px;height:28px;background:#ffffff"></div>
<div class="r" style="left:13px;top:670px;width:1883px;height:1px;background:#e2e2e2"></div>
<svg class="r" style="left:22px;top:651px;" width="14" height="8" viewBox="22 651 14 8"><rect x="24.5" y="653.5" width="9" height="3" fill="#8cb6dc" stroke="#3f6a8e" stroke-width="1"/></svg>
<div id="r14n" class="t" style="left:45.00px;top:649.25px;font-size:13.7px;line-height:16px;letter-spacing:-0.508px;color:#383838;font-weight:normal;">Должность спецоценка</div>
<svg class="r" style="left:1322px;top:646px;" width="18" height="16" viewBox="1322 646 18 16"><path d="M1325.2,654 L1328.5,657.6 L1335.8,648.2" fill="none" stroke="#0f9a47" stroke-width="2.3" stroke-linecap="round" stroke-linejoin="round"/></svg>
<div id="r14d" class="t" style="left:1389.00px;top:648.08px;font-size:14.2px;line-height:16px;letter-spacing:-0.672px;color:#383838;font-weight:normal;">01.11.2024</div>
<div class="r" style="left:13px;top:671px;width:1883px;height:28px;background:#f8f8f8"></div>
<div class="r" style="left:13px;top:699px;width:1883px;height:1px;background:#e2e2e2"></div>
<svg class="r" style="left:22px;top:680px;" width="14" height="8" viewBox="22 680 14 8"><rect x="24.5" y="682.5" width="9" height="3" fill="#8cb6dc" stroke="#3f6a8e" stroke-width="1"/></svg>
<div id="r15n" class="t" style="left:44.00px;top:678.25px;font-size:13.7px;line-height:16px;letter-spacing:-0.010px;color:#383838;font-weight:normal;">Кассир</div>
<svg class="r" style="left:1322px;top:675px;" width="18" height="16" viewBox="1322 675 18 16"><path d="M1325.2,683 L1328.5,686.6 L1335.8,677.2" fill="none" stroke="#0f9a47" stroke-width="2.3" stroke-linecap="round" stroke-linejoin="round"/></svg>
<div id="r15d" class="t" style="left:1389.00px;top:677.08px;font-size:14.2px;line-height:16px;letter-spacing:-0.783px;color:#383838;font-weight:normal;">01.03.2022</div>
<div class="r" style="left:13px;top:700px;width:1883px;height:28px;background:#ffffff"></div>
<div class="r" style="left:13px;top:728px;width:1883px;height:1px;background:#e2e2e2"></div>
<svg class="r" style="left:22px;top:709px;" width="14" height="8" viewBox="22 709 14 8"><rect x="24.5" y="711.5" width="9" height="3" fill="#8cb6dc" stroke="#3f6a8e" stroke-width="1"/></svg>
<div id="r16n" class="t" style="left:44.00px;top:707.25px;font-size:13.7px;line-height:16px;letter-spacing:-0.430px;color:#383838;font-weight:normal;">Начальник отдела</div>
<svg class="r" style="left:1322px;top:704px;" width="18" height="16" viewBox="1322 704 18 16"><path d="M1325.2,712 L1328.5,715.6 L1335.8,706.2" fill="none" stroke="#0f9a47" stroke-width="2.3" stroke-linecap="round" stroke-linejoin="round"/></svg>
<div id="r16d" class="t" style="left:1389.00px;top:706.08px;font-size:14.2px;line-height:16px;letter-spacing:-0.783px;color:#383838;font-weight:normal;">01.01.2012</div>
<div id="r16c" class="t" style="left:1505.00px;top:706.08px;font-size:14.2px;line-height:16px;letter-spacing:-0.983px;color:#383838;font-weight:normal;">1219</div>
<div class="r" style="left:13px;top:729px;width:1883px;height:28px;background:#f8f8f8"></div>
<div class="r" style="left:13px;top:757px;width:1883px;height:1px;background:#e2e2e2"></div>
<svg class="r" style="left:22px;top:738px;" width="14" height="8" viewBox="22 738 14 8"><rect x="24.5" y="740.5" width="9" height="3" fill="#8cb6dc" stroke="#3f6a8e" stroke-width="1"/></svg>
<div id="r17n" class="t" style="left:44.00px;top:736.25px;font-size:13.7px;line-height:16px;letter-spacing:-0.397px;color:#383838;font-weight:normal;">Начальник управления</div>
<svg class="r" style="left:1322px;top:733px;" width="18" height="16" viewBox="1322 733 18 16"><path d="M1325.2,741 L1328.5,744.6 L1335.8,735.2" fill="none" stroke="#0f9a47" stroke-width="2.3" stroke-linecap="round" stroke-linejoin="round"/></svg>
<div id="r17d" class="t" style="left:1389.00px;top:735.08px;font-size:14.2px;line-height:16px;letter-spacing:-0.783px;color:#383838;font-weight:normal;">01.01.2012</div>
<div id="r17c" class="t" style="left:1505.00px;top:735.08px;font-size:14.2px;line-height:16px;letter-spacing:-0.983px;color:#383838;font-weight:normal;">1219</div>
<div class="r" style="left:13px;top:758px;width:1883px;height:28px;background:#ffffff"></div>
<div class="r" style="left:13px;top:786px;width:1883px;height:1px;background:#e2e2e2"></div>
<svg class="r" style="left:22px;top:767px;" width="14" height="8" viewBox="22 767 14 8"><rect x="24.5" y="769.5" width="9" height="3" fill="#8cb6dc" stroke="#3f6a8e" stroke-width="1"/></svg>
<div id="r18n" class="t" style="left:44.00px;top:765.25px;font-size:13.7px;line-height:16px;letter-spacing:-0.444px;color:#383838;font-weight:normal;">Начальник сектора</div>
<svg class="r" style="left:1322px;top:762px;" width="18" height="16" viewBox="1322 762 18 16"><path d="M1325.2,770 L1328.5,773.6 L1335.8,764.2" fill="none" stroke="#0f9a47" stroke-width="2.3" stroke-linecap="round" stroke-linejoin="round"/></svg>
<div id="r18d" class="t" style="left:1389.00px;top:764.08px;font-size:14.2px;line-height:16px;letter-spacing:-0.783px;color:#383838;font-weight:normal;">01.01.2012</div>
<div id="r18c" class="t" style="left:1505.00px;top:764.08px;font-size:14.2px;line-height:16px;letter-spacing:-0.983px;color:#383838;font-weight:normal;">1219</div>
<div class="r" style="left:13px;top:787px;width:1883px;height:28px;background:#fdf0c4"></div>
<div class="r" style="left:13px;top:815px;width:1883px;height:1px;background:#e2e2e2"></div>
<div class="r" style="left:1311px;top:787px;width:1px;height:28px;background:#fff"></div>
<div class="r" style="left:1380px;top:787px;width:1px;height:28px;background:#fff"></div>
<div class="r" style="left:1497px;top:787px;width:1px;height:28px;background:#fff"></div>
<div class="r" style="left:1624px;top:787px;width:1px;height:28px;background:#fff"></div>
<div class="r" style="left:1498px;top:787px;width:126px;height:28px;box-sizing:border-box;border:2px solid #f6c212;background:#fde48f"></div>
<svg class="r" style="left:22px;top:796px;" width="14" height="8" viewBox="22 796 14 8"><rect x="24.5" y="798.5" width="9" height="3" fill="#8cb6dc" stroke="#3f6a8e" stroke-width="1"/></svg>
<div id="r19n" class="t" style="left:44.00px;top:794.25px;font-size:13.7px;line-height:16px;letter-spacing:-0.250px;color:#383838;font-weight:normal;">Бухгалтер</div>
<svg class="r" style="left:1322px;top:791px;" width="18" height="16" viewBox="1322 791 18 16"><path d="M1325.2,799 L1328.5,802.6 L1335.8,793.2" fill="none" stroke="#0f9a47" stroke-width="2.3" stroke-linecap="round" stroke-linejoin="round"/></svg>
<div id="r19d" class="t" style="left:1389.00px;top:793.08px;font-size:14.2px;line-height:16px;letter-spacing:-0.783px;color:#383838;font-weight:normal;">01.01.2022</div>
<div id="r19c" class="t" style="left:1506.00px;top:793.08px;font-size:14.2px;line-height:16px;letter-spacing:-0.983px;color:#383838;font-weight:normal;">2411</div>
<div id="r19k" class="t" style="left:1633.00px;top:793.08px;font-size:14.2px;line-height:16px;letter-spacing:-0.650px;color:#383838;font-weight:normal;">9</div>
<div class="r" style="left:13px;top:816px;width:1883px;height:28px;background:#ffffff"></div>
<div class="r" style="left:13px;top:844px;width:1883px;height:1px;background:#e2e2e2"></div>
<svg class="r" style="left:22px;top:825px;" width="14" height="8" viewBox="22 825 14 8"><rect x="24.5" y="827.5" width="9" height="3" fill="#8cb6dc" stroke="#3f6a8e" stroke-width="1"/></svg>
<div id="r20n" class="t" style="left:44.00px;top:823.25px;font-size:13.7px;line-height:16px;letter-spacing:-0.487px;color:#383838;font-weight:normal;">Главный экономист</div>
<svg class="r" style="left:1322px;top:820px;" width="18" height="16" viewBox="1322 820 18 16"><path d="M1325.2,828 L1328.5,831.6 L1335.8,822.2" fill="none" stroke="#0f9a47" stroke-width="2.3" stroke-linecap="round" stroke-linejoin="round"/></svg>
<div id="r20d" class="t" style="left:1389.00px;top:822.08px;font-size:14.2px;line-height:16px;letter-spacing:-0.783px;color:#383838;font-weight:normal;">01.01.2012</div>
<div id="r20c" class="t" style="left:1506.00px;top:822.08px;font-size:14.2px;line-height:16px;letter-spacing:-0.983px;color:#383838;font-weight:normal;">2411</div>
<div id="r20k" class="t" style="left:1633.00px;top:822.08px;font-size:14.2px;line-height:16px;letter-spacing:-0.650px;color:#383838;font-weight:normal;">9</div>
<div class="r" style="left:13px;top:845px;width:1883px;height:28px;background:#f8f8f8"></div>
<div class="r" style="left:13px;top:873px;width:1883px;height:1px;background:#e2e2e2"></div>
<svg class="r" style="left:22px;top:854px;" width="14" height="8" viewBox="22 854 14 8"><rect x="24.5" y="856.5" width="9" height="3" fill="#8cb6dc" stroke="#3f6a8e" stroke-width="1"/></svg>
<div id="r21n" class="t" style="left:45.00px;top:852.25px;font-size:13.7px;line-height:16px;letter-spacing:-0.466px;color:#383838;font-weight:normal;">Слесарь 5-го разряда</div>
<svg class="r" style="left:1322px;top:849px;" width="18" height="16" viewBox="1322 849 18 16"><path d="M1325.2,857 L1328.5,860.6 L1335.8,851.2" fill="none" stroke="#0f9a47" stroke-width="2.3" stroke-linecap="round" stroke-linejoin="round"/></svg>
<div id="r21d" class="t" style="left:1389.00px;top:851.08px;font-size:14.2px;line-height:16px;letter-spacing:-0.672px;color:#383838;font-weight:normal;">01.11.2023</div>
<div id="r21c" class="t" style="left:1506.00px;top:851.08px;font-size:14.2px;line-height:16px;letter-spacing:-0.983px;color:#383838;font-weight:normal;">3339</div>
<div id="r21k" class="t" style="left:1633.00px;top:851.08px;font-size:14.2px;line-height:16px;letter-spacing:-0.650px;color:#383838;font-weight:normal;">7</div>
<div class="r" style="left:13px;top:874px;width:1883px;height:28px;background:#ffffff"></div>
<div class="r" style="left:13px;top:902px;width:1883px;height:1px;background:#e2e2e2"></div>
<svg class="r" style="left:22px;top:883px;" width="14" height="8" viewBox="22 883 14 8"><rect x="24.5" y="885.5" width="9" height="3" fill="#8cb6dc" stroke="#3f6a8e" stroke-width="1"/></svg>
<div id="r22n" class="t" style="left:45.00px;top:881.25px;font-size:13.7px;line-height:16px;letter-spacing:-0.586px;color:#383838;font-weight:normal;">Сторож 0,125</div>
<svg class="r" style="left:1322px;top:878px;" width="18" height="16" viewBox="1322 878 18 16"><path d="M1325.2,886 L1328.5,889.6 L1335.8,880.2" fill="none" stroke="#0f9a47" stroke-width="2.3" stroke-linecap="round" stroke-linejoin="round"/></svg>
<div id="r22d" class="t" style="left:1389.00px;top:880.08px;font-size:14.2px;line-height:16px;letter-spacing:-0.783px;color:#383838;font-weight:normal;">01.03.2025</div>
<div id="r22c" class="t" style="left:1506.00px;top:880.08px;font-size:14.2px;line-height:16px;letter-spacing:-0.983px;color:#383838;font-weight:normal;">3339</div>
<div id="r22k" class="t" style="left:1633.00px;top:880.08px;font-size:14.2px;line-height:16px;letter-spacing:-0.650px;color:#383838;font-weight:normal;">7</div>
<svg class="r" style="left:0px;top:780px;" width="1896" height="45" viewBox="0 780 1896 45"><rect x="17" y="791.3" width="1875.5" height="23.8" rx="5.5" ry="5.5" fill="none" stroke="#e2392e" stroke-width="5"/></svg>
</body></html>
